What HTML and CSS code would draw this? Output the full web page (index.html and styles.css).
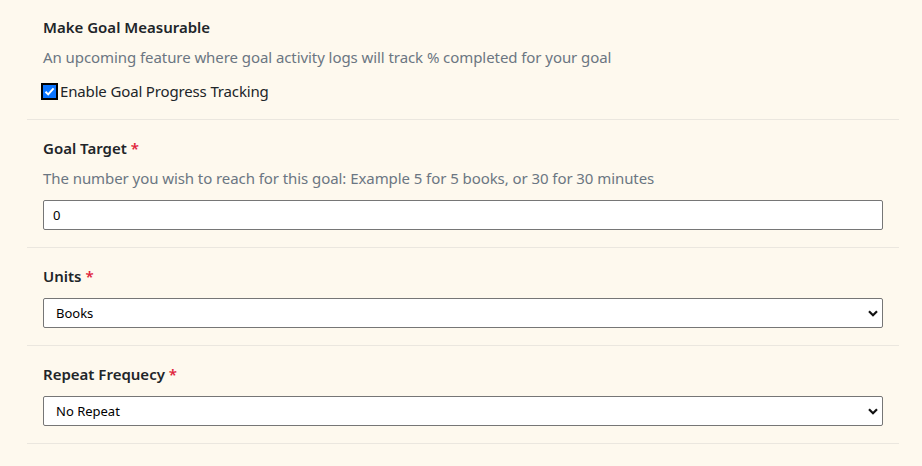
FILE: index.html
```html
<!DOCTYPE html>
<html>
<head>
<meta charset="utf-8">
<link rel="stylesheet" href="styles.css">
</head>
<body>
<div class="form">
  <section class="field">
    <div class="label">Make Goal Measurable</div>
    <div class="hint">An upcoming feature where goal activity logs will track % completed for your goal</div>
    <label class="check">
      <span class="box"><svg width="11" height="11" viewBox="0 0 11 11"><path d="M1.5 5.8 L4.2 8.4 L9.6 2.4" fill="none" stroke="#fff" stroke-width="2"/></svg></span>
      <span class="check-text">Enable Goal Progress Tracking</span>
    </label>
  </section>
  <section class="field">
    <div class="label">Goal Target <span class="req">*</span></div>
    <div class="hint">The number you wish to reach for this goal: Example 5 for 5 books, or 30 for 30 minutes</div>
    <input class="control" type="text" value="0">
  </section>
  <section class="field">
    <div class="label">Units <span class="req">*</span></div>
    <div class="select-wrap">
      <select class="control select"><option>Books</option></select>
      <svg class="chev" width="10" height="7" viewBox="0 0 10 7"><path d="M1 1.2 L5 5.2 L9 1.2" fill="none" stroke="#111" stroke-width="2.2"/></svg>
    </div>
  </section>
  <section class="field">
    <div class="label">Repeat Frequecy <span class="req">*</span></div>
    <div class="select-wrap">
      <select class="control select"><option>No Repeat</option></select>
      <svg class="chev" width="10" height="7" viewBox="0 0 10 7"><path d="M1 1.2 L5 5.2 L9 1.2" fill="none" stroke="#111" stroke-width="2.2"/></svg>
    </div>
  </section>
</div>
</body>
</html>
```
FILE: styles.css
```css
html, body {
  margin: 0;
  padding: 0;
  background: #fef9ee;
}
body {
  font-family: "Noto Sans", "Open Sans", sans-serif;
  color: #212529;
  height: 466px;
  overflow: hidden;
}
.form {
  margin-left: 27px;
  width: 872px;
}
.field {
  padding: 15px 16px 16px;
  border-bottom: 1px solid #ebe7df;
}
.field + .field {
  padding-top: 16px;
  padding-bottom: 17px;
}
.label {
  font-size: 15px;
  font-weight: 600;
  line-height: 24px;
  color: #212529;
}
.req {
  color: #e0243c;
}
.hint {
  font-size: 15px;
  line-height: 24px;
  color: #6b7682;
  margin-top: 6px;
  letter-spacing: -0.07px;
}
.check {
  display: flex;
  align-items: center;
  margin-top: 10px;
  font-size: 15px;
  line-height: 24px;
  color: #212529;
}
.check-text {
  letter-spacing: -0.15px;
}
.box {
  width: 13px;
  height: 13px;
  margin-left: -2px;
  margin-right: 2px;
  background: #0a74ff;
  border: 2px solid #000;
  display: flex;
  align-items: center;
  justify-content: center;
}
.control {
  display: block;
  box-sizing: border-box;
  width: 840px;
  height: 30px;
  border: 1px solid #767676;
  border-radius: 2px;
  background: #fff;
  font-family: "Noto Sans", "Open Sans", sans-serif;
  font-size: 13px;
  color: #000;
  padding: 0 9px;
  margin-top: 10px;
  outline: none;
}
.select {
  appearance: none;
  -webkit-appearance: none;
  padding-left: 12px;
  margin-top: 0;
}
.select-wrap {
  position: relative;
  margin-top: 10px;
  width: 840px;
}
.chev {
  position: absolute;
  right: 5px;
  top: 12px;
  pointer-events: none;
}
```
